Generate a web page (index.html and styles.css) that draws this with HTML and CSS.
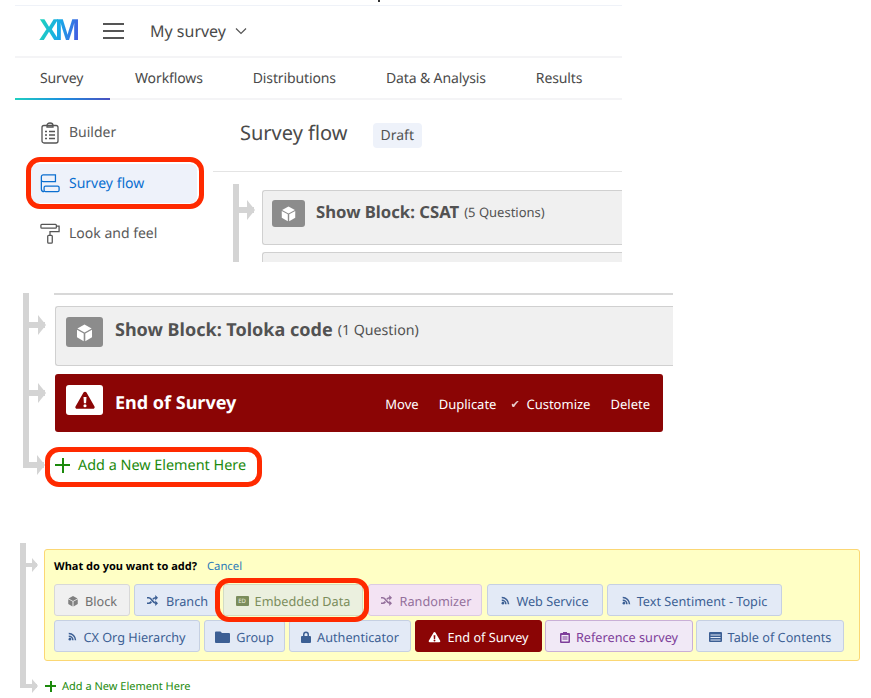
FILE: index.html
```html
<!DOCTYPE html>
<html lang="en">
<head>
    <meta charset="UTF-8">
    <title>Survey flow</title>
    <link rel="stylesheet" href="styles.css">
</head>
<body>
    <svg class="defs" width="0" height="0">
        <symbol id="cube" viewBox="0 0 24 24">
            <path d="M12 2 21 7 12 12 3 7Z"/>
            <path d="M2.5 8.5 11 13.2V23L2.5 18Z"/>
            <path d="M21.5 8.5V18L13 23V13.2Z"/>
        </symbol>
        <symbol id="warn" viewBox="0 0 24 24">
            <path fill-rule="evenodd" d="M12 2c.8 0 1.4.4 1.8 1.1l9.6 16.6c.7 1.3-.2 2.8-1.7 2.8H2.300c-1.500 0-2.400-1.500-1.700-2.800L10.200 3.100C10.600 2.400 11.200 2 12 2Zm-1.800 6.500.5 7.500h2.600l.5-7.500ZM12 17a1.900 1.900 0 1 0 0 3.800A1.900 1.900 0 0 0 12 17Z"/>
        </symbol>
        <symbol id="rss" viewBox="0 0 24 24">
            <circle cx="5" cy="19" r="3.500"/>
            <path d="M2 9v4a9 9 0 0 1 9 9h4A13 13 0 0 0 2 9Z"/>
            <path d="M2 2v4a16 16 0 0 1 16 16h4A20 20 0 0 0 2 2Z"/>
        </symbol>
        <symbol id="shuffle" viewBox="0 0 24 24">
            <path fill="none" stroke="currentColor" stroke-width="3.800" d="M0 6h4c6 0 9 12 15 12h2M0 18h4c2.500 0 4-1.500 5.500-3.500M13 9c1.500-1.800 3.500-3 6-3h2"/>
            <path d="M18 0 24 6l-6 6ZM18 12l6 6-6 6Z"/>
        </symbol>
    </svg>

    <section class="shot shot-top">
        <header class="topbar">
            <span class="xm-logo">XM</span>
            <span class="burger"><i></i><i></i><i></i></span>
            <span class="survey-name">My survey</span>
            <svg class="chevron" viewBox="0 0 12 8" width="12" height="8"><path d="M1 1.500 6 6.500 11 1.500" fill="none" stroke="#555" stroke-width="1.200"/></svg>
        </header>
        <nav class="tabs">
            <a class="tab active">Survey</a>
            <a class="tab">Workflows</a>
            <a class="tab">Distributions</a>
            <a class="tab">Data &amp; Analysis</a>
            <a class="tab">Results</a>
        </nav>
        <div class="columns">
            <aside class="sidebar">
                <a class="side-item">
                    <svg viewBox="0 0 20 22" width="20" height="22" fill="none" stroke="#555" stroke-width="1.300">
                        <rect x="2" y="3.500" width="16" height="17.500" rx="2"/>
                        <path d="M7 3.500C7 2 8 1 10 1s3 1 3 2.500V5H7ZM9 9.500h6M9 13h6M9 16.500h6M5 9.500h2M5 13h2M5 16.500h2"/>
                    </svg>
                    Builder
                </a>
                <a class="side-item current">
                    <svg viewBox="0 0 22 22" width="21" height="21" fill="none" stroke="#0b6fd0" stroke-width="1.400">
                        <path d="M17 9H3.500A2 2 0 0 1 1.500 7V3.500a2 2 0 0 1 2-2H17v7.500ZM1.500 7v10a3 3 0 0 0 3 3"/>
                        <rect x="4.500" y="14" width="16.500" height="6" rx="1.500"/>
                    </svg>
                    Survey flow
                </a>
                <a class="side-item">
                    <svg viewBox="0 0 22 22" width="20" height="21" fill="none" stroke="#555" stroke-width="1.400">
                        <rect x="1" y="1" width="17" height="4" rx="1"/>
                        <path d="M18 3h3v6H11v4"/>
                        <rect x="8.500" y="13" width="5" height="8.500" rx="1"/>
                    </svg>
                    Look and feel
                </a>
            </aside>
            <main class="main">
                <div class="page-head">
                    <h1>Survey flow</h1>
                    <span class="draft">Draft</span>
                </div>
                <div class="flow flow-a">
                    <div class="row">
                        <span class="arrow"></span>
                        <div class="block">
                            <span class="block-icon"><svg width="17" height="17"><use href="#cube"/></svg></span>
                            <span class="block-title">Show Block: CSAT</span>
                            <span class="block-count">(5 Questions)</span>
                        </div>
                    </div>
                    <div class="row row-next">
                        <span class="arrow"></span>
                        <div class="block"></div>
                    </div>
                </div>
            </main>
        </div>
        <span class="marker marker-flow"></span>
    </section>

    <section class="shot shot-mid">
        <div class="flow flow-b">
            <div class="block-end"></div>
            <div class="row">
                <span class="arrow"></span>
                <div class="block big">
                    <span class="block-icon"><svg width="19" height="19"><use href="#cube"/></svg></span>
                    <span class="block-title">Show Block: Toloka code</span>
                    <span class="block-count">(1 Question)</span>
                </div>
            </div>
            <div class="row row-end">
                <span class="arrow"></span>
                <div class="end-block">
                    <span class="block-icon"><svg width="20" height="20"><use href="#warn"/></svg></span>
                    <span class="block-title">End of Survey</span>
                    <span class="actions">
                        <a>Move</a>
                        <a>Duplicate</a>
                        <a class="customize">Customize</a>
                        <a>Delete</a>
                    </span>
                </div>
            </div>
            <div class="row row-add">
                <span class="arrow"></span>
                <a class="add-link"><span class="plus"></span>Add a New Element Here</a>
            </div>
        </div>
        <span class="marker marker-add"></span>
    </section>

    <section class="shot shot-bottom">
        <div class="flow flow-c">
            <div class="row">
                <span class="arrow"></span>
                <div class="picker">
                    <div class="picker-head"><b>What do you want to add?</b><a>Cancel</a></div>
                    <div class="btn-row">
                        <a class="btn grey w-block"><svg width="12" height="12"><use href="#cube"/></svg>Block</a>
                        <a class="btn w-branch"><svg width="15" height="11"><use href="#shuffle"/></svg>Branch</a>
                        <a class="btn green w-embedded"><span class="ed">ED</span>Embedded Data</a>
                        <a class="btn purple w-random"><svg width="15" height="11"><use href="#shuffle"/></svg>Randomizer</a>
                        <a class="btn w-web"><svg width="9" height="9"><use href="#rss"/></svg>Web Service</a>
                        <a class="btn w-text"><svg width="9" height="9"><use href="#rss"/></svg>Text Sentiment - Topic</a>
                    </div>
                    <div class="btn-row">
                        <a class="btn w-cx"><svg width="9" height="9"><use href="#rss"/></svg>CX Org Hierarchy</a>
                        <a class="btn w-group"><svg width="15" height="13" viewBox="0 0 15 13"><path d="M0 2.500a1 1 0 0 1 1-1h4.500L7 3h7a1 1 0 0 1 1 1v8a1 1 0 0 1-1 1H1a1 1 0 0 1-1-1Z"/></svg>Group</a>
                        <a class="btn w-auth"><svg width="10" height="12" viewBox="0 0 10 12"><path fill-rule="evenodd" d="M2 5V3.500a3 3 0 0 1 6 0V5h1a1 1 0 0 1 1 1v5a1 1 0 0 1-1 1H1a1 1 0 0 1-1-1V6a1 1 0 0 1 1-1Zm1.500 0h3V3.500a1.500 1.500 0 0 0-3 0Z"/></svg>Authenticator</a>
                        <a class="btn danger w-eos"><svg width="13" height="12"><use href="#warn"/></svg>End of Survey</a>
                        <a class="btn lilac w-ref"><svg width="10" height="12" viewBox="0 0 10 12"><path fill-rule="evenodd" d="M3 1h4v1h2a1 1 0 0 1 1 1v8a1 1 0 0 1-1 1H1a1 1 0 0 1-1-1V3a1 1 0 0 1 1-1h2Zm-1.500 3v6.500h7V4ZM2.500 5.500h5v1h-5Zm0 2h5v1h-5Z"/></svg>Reference survey</a>
                        <a class="btn w-toc"><svg width="13" height="10" viewBox="0 0 13 10"><path fill-rule="evenodd" d="M1 0h11a1 1 0 0 1 1 1v8a1 1 0 0 1-1 1H1a1 1 0 0 1-1-1V1a1 1 0 0 1 1-1Zm.5 2.500v1h10v-1Zm0 2.500v1h10V5Zm0 2.500v1h10v-1Z"/></svg>Table of Contents</a>
                    </div>
                </div>
            </div>
            <div class="row row-add">
                <span class="arrow"></span>
                <a class="add-link"><span class="plus"></span>Add a New Element Here</a>
            </div>
        </div>
        <span class="marker marker-data"></span>
    </section>
</body>
</html>
```

FILE: styles.css
```css
* {
    box-sizing: border-box;
}

body {
    margin: 0;
    height: 698px;
    overflow: hidden;
    background-color: #fff;
    color: #525252;
    font-family: "Noto Sans", sans-serif;
    text-rendering: geometricPrecision;
}

/* scrap left over at the top edge of the collage */
body::before {
    content: "";
    position: absolute;
    left: 378px;
    top: 0;
    width: 2px;
    height: 2px;
    background-color: #333;
}

.defs {
    position: absolute;
}

.block-icon svg,
.btn svg {
    fill: currentColor;
    flex: none;
}

.shot {
    position: relative;
}

.marker {
    position: absolute;
    border: 5px solid #ff2a00;
    border-radius: 14px;
}

/* top screenshot */
.shot-top {
    width: 607px;
    height: 257px;
    margin: 5px 0 0 15px;
    border-top: 1px solid #eff2f8;
    overflow: hidden;
}

.topbar {
    display: flex;
    align-items: center;
    height: 52px;
    padding-left: 24px;
    border-bottom: 2px solid #f4f4f6;
}

.xm-logo {
    width: 40px;
    font-family: "Liberation Sans", sans-serif;
    font-size: 30px;
    font-weight: 700;
    letter-spacing: -4px;
    background: linear-gradient(100deg, #1fd8b8, #18a8e8 50%, #4a50e0);
    -webkit-background-clip: text;
    background-clip: text;
    color: transparent;
}

.burger {
    display: flex;
    flex-direction: column;
    gap: 5px;
    width: 21px;
    margin-left: 24px;
}

.burger i {
    height: 2px;
    background-color: #555;
}

.survey-name {
    margin: 0 9px 0 26px;
    font-size: 16px;
    color: #4a4a4a;
}

.tabs {
    display: flex;
    height: 42px;
    border-bottom: 2px solid #f4f4f6;
}

.tab {
    position: relative;
    padding: 0 25px;
    font-size: 14px;
    letter-spacing: -0.120px;
    line-height: 42px;
    color: #4a4a4a;
}

.tab.active {
    width: 95px;
}

.tab.active::after {
    content: "";
    position: absolute;
    left: 0;
    right: 0;
    bottom: -2px;
    height: 2px;
    background: linear-gradient(90deg, #20cfc0, #1c8fe0 50%, #4a50c0);
}

.columns {
    display: flex;
}

.sidebar {
    display: flex;
    flex-direction: column;
    gap: 11.500px;
    width: 198px;
    padding: 13px 0 0 16px;
}

.side-item {
    display: flex;
    align-items: center;
    gap: 9px;
    width: 166px;
    height: 39px;
    padding-left: 9px;
    border-radius: 6px;
    font-size: 14px;
    color: #5a5a5a;
}

.side-item svg {
    width: 20px;
}

.side-item.current {
    background-color: #eef2fa;
    color: #0b6fd0;
}

.main {
    flex: 1;
}

.page-head {
    display: flex;
    align-items: center;
    gap: 25px;
    height: 72px;
    padding: 0 0 6px 27px;
    border-bottom: 1px solid #e4e4e4;
}

h1 {
    margin: 0;
    font-size: 20px;
    font-weight: 400;
    color: #4a4a4a;
}

.draft {
    margin-top: 6px;
    padding: 0 8px;
    border-radius: 4px;
    background-color: #eef2fa;
    font-size: 14px;
    line-height: 25px;
}

/* flow rail and arrows */
.flow {
    position: relative;
    border-left: 6px solid #d4d4d4;
}

.flow-a {
    margin: 12px 0 0 20px;
    padding-top: 6px;
}

.row {
    display: flex;
    align-items: flex-start;
}

.arrow {
    position: relative;
    flex: none;
    width: 15px;
    height: 6px;
    margin: 17px 8px 0 0;
    background-color: #d4d4d4;
}

.arrow::after {
    content: "";
    position: absolute;
    right: -1px;
    top: -7px;
    border-left: 8px solid #d4d4d4;
    border-top: 10px solid transparent;
    border-bottom: 10px solid transparent;
}

.block {
    display: flex;
    align-items: flex-start;
    flex: 1;
    height: 55px;
    padding: 9px 0 0 9px;
    border: 1px solid #d0d0d0;
    border-right: 0;
    border-radius: 3px 0 0 3px;
    background-color: #f0f0f0;
}

.row-next {
    margin-top: 7px;
}

.block-icon {
    display: flex;
    align-items: center;
    justify-content: center;
    width: 33px;
    height: 27px;
    border-radius: 3px;
    background-color: #8c8c8c;
    color: #fff;
}

.block-title {
    margin-left: 11px;
    font-size: 16.700px;
    font-weight: 700;
    line-height: 24px;
    color: #525252;
}

.block-count {
    margin-left: 5px;
    font-size: 13px;
    line-height: 25px;
}

/* middle screenshot */
.shot-mid {
    width: 650px;
    height: 195px;
    margin: 31px 0 0 23px;
}

.flow-b {
    height: 175px;
}

.flow-b .arrow {
    width: 16px;
    margin: 16px 10px 0 0;
}

.block-end {
    height: 2px;
    margin: 0 0 11px 25px;
    border-bottom: 2px solid #d8d8d8;
}

.block.big {
    height: 60px;
    padding: 10px 0 0 10px;
}

.big .block-icon,
.end-block .block-icon {
    width: 37px;
    height: 30px;
}

.big .block-title,
.end-block .block-title {
    margin-left: 12px;
    font-size: 18px;
    line-height: 27px;
}

.big .block-count {
    margin-left: 5px;
    font-size: 14.200px;
    line-height: 28px;
}

.row-end {
    margin-top: 8px;
}

.end-block {
    display: flex;
    align-items: flex-start;
    flex: none;
    width: 608px;
    height: 58px;
    padding: 11px 13px 0 11px;
    border-radius: 3px;
    background-color: #8b0505;
    color: #fff;
}

.end-block .block-icon {
    background-color: #fff;
    color: #8b0505;
}

.end-block .block-title {
    line-height: 37px;
    color: #fff;
}

.actions {
    display: flex;
    gap: 20px;
    margin-left: auto;
    font-size: 13px;
    line-height: 39px;
}

.customize {
    position: relative;
    margin-left: 10px;
}

.customize::before {
    content: "\2714";
    position: absolute;
    left: -16px;
    font-size: 11px;
    opacity: 0.8;
}

.row-add {
    position: absolute;
    left: -6px;
    bottom: -9px;
    height: 24px;
    align-items: center;
}

.flow .row-add .arrow {
    margin: 0 11px 0 0;
    width: 21px;
}

.add-link {
    display: flex;
    align-items: center;
    gap: 8px;
    font-size: 14.400px;
    color: #1c8a0c;
}

.plus {
    position: relative;
    width: 15px;
    height: 15px;
    background:
        linear-gradient(#1c8a0c, #1c8a0c) center / 100% 2px no-repeat,
        linear-gradient(#1c8a0c, #1c8a0c) center / 2px 100% no-repeat;
}

.marker-flow {
    left: 11px;
    top: 151px;
    width: 178px;
    height: 52px;
}

.marker-add {
    left: 22px;
    top: 154px;
    width: 217px;
    height: 40px;
}

/* bottom screenshot */
.shot-bottom {
    width: 851px;
    height: 155px;
    margin: 55px 0 0 20px;
}

.flow-c {
    height: 145px;
    padding-top: 6px;
}

.flow-c .arrow {
    width: 11px;
    height: 4px;
    margin: 14px 7px 0 0;
}

.flow-c .arrow::after {
    top: -5px;
    border-left-width: 6px;
    border-top-width: 7px;
    border-bottom-width: 7px;
}

.picker {
    width: 816px;
    height: 112px;
    padding: 8px 9px;
    border: 1px solid #fbd774;
    border-radius: 3px;
    background-color: #ffffc5;
}

.picker-head {
    display: flex;
    gap: 10px;
    height: 18px;
    font-size: 11px;
    line-height: 17px;
    color: #000;
}

.picker-head a {
    font-size: 11.300px;
    color: #2a7ab8;
}

.btn-row {
    display: flex;
    margin-top: 4px;
}

.picker-head + .btn-row {
    margin-top: 8px;
}

.btn {
    display: flex;
    align-items: center;
    justify-content: center;
    gap: 6px;
    height: 32px;
    margin-right: 4px;
    padding-top: 1px;
    border: 1px solid #c6d0e2;
    border-radius: 3px;
    background-color: #e3eaf6;
    font-size: 12.700px;
    color: #3c5f94;
}

.btn.grey {
    border-color: #d8d8d8;
    background-color: #f0f0f0;
    color: #6e6e6e;
}

.btn.grey svg {
    color: #808080;
}

.btn.green {
    border-color: #d3dcc4;
    background-color: #ebf0df;
    color: #7b8d5c;
}

.btn.purple {
    border-color: #dccbe2;
    background-color: #f3e3f3;
    color: #94709c;
}

.btn.lilac {
    border-color: #c9afd6;
    background-color: #f1e9f6;
    color: #7e3e9a;
}

.btn.danger {
    border-color: #8b0505;
    background-color: #8b0505;
    color: #fff;
}

.ed {
    width: 13px;
    height: 10px;
    border-radius: 1px;
    background-color: #7b8d5c;
    color: #ebf0df;
    font-size: 6px;
    line-height: 10px;
    text-align: center;
}

.w-block { width: 76px; }
.w-branch { width: 85px; }
.w-embedded { width: 140px; margin-right: 5px; }
.w-random { width: 114px; margin-right: 5px; }
.w-web { width: 116px; }
.w-text { width: 175px; }
.w-cx { width: 146px; }
.w-group { width: 81px; }
.w-auth { width: 122px; }
.w-eos { width: 127px; margin-right: 3px; }
.w-ref { width: 148px; margin-right: 3px; }
.w-toc { width: 148px; }

.flow-c .row-add {
    bottom: -8px;
    height: 20px;
}

.flow-c .row-add .arrow {
    width: 17px;
    margin: 0 8px 0 0;
}

.flow-c .add-link {
    gap: 6px;
    font-size: 11px;
}

.flow-c .plus {
    width: 11px;
    height: 11px;
}

.marker-data {
    left: 195px;
    top: 35px;
    width: 154px;
    height: 44px;
}
```
